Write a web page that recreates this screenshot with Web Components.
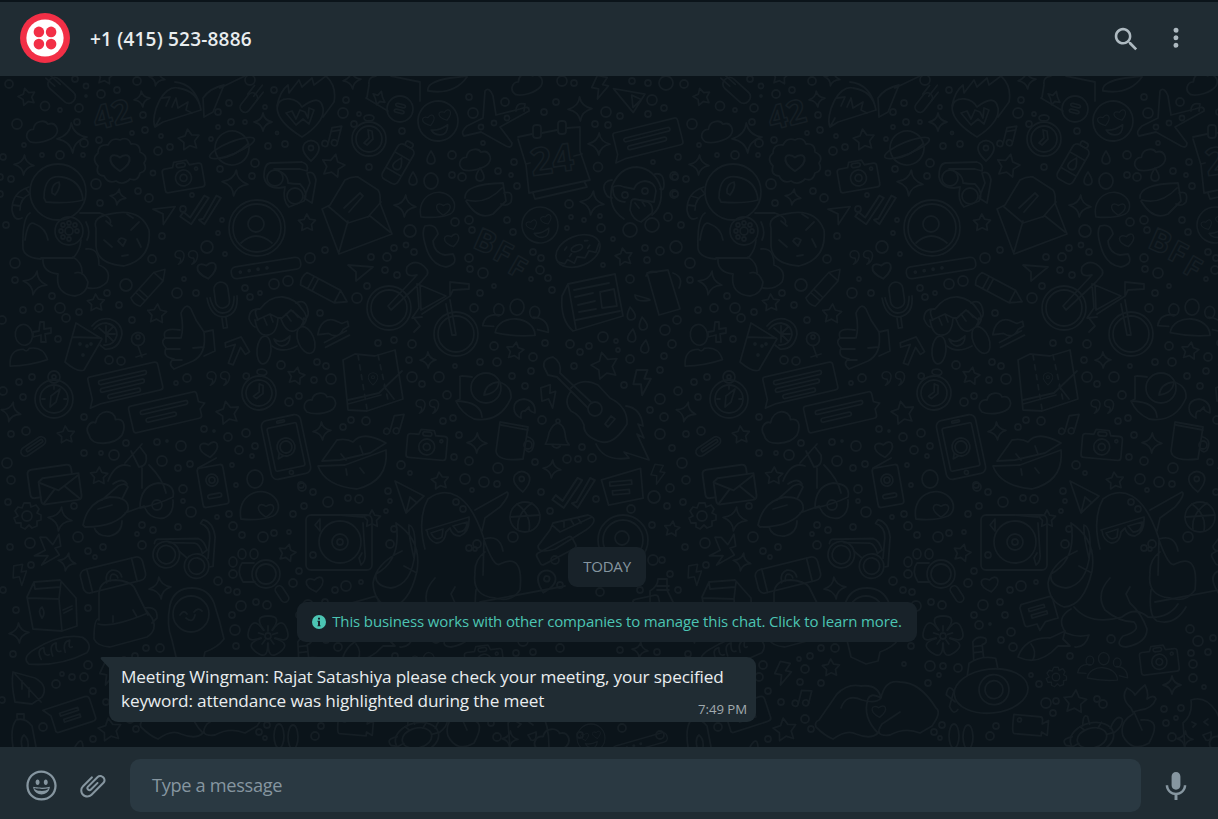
<!DOCTYPE html>
<html lang="en">
<head>
<meta charset="utf-8">
<title>Chat</title>
<style>
html,body{margin:0;height:100%;overflow:hidden;background:#0b141a}
</style>
</head>
<body>
<chat-app></chat-app>
<script>
const define=(name,html)=>{
  const t=document.createElement('template');t.innerHTML=html;
  customElements.define(name,class extends HTMLElement{
    constructor(){super();this.attachShadow({mode:'open'}).append(t.content.cloneNode(true));}
  });
};

/* ---------- wallpaper ---------- */
// Small dots: x, y, radius
const dots=`9,84,4 75,79,3 86,86,2.5 86,96,1 101,94,4 117,90,3 137,81,4 45,106,4.5 60,110,2 79,108,4 143,115,3 77,122,3 17,124,5 24,145,2 42,155,2 60,155,4 84,143,4 99,140,3 83,155,2 132,133,2 145,130,3 161,136,2 170,147,3 158,151,4 211,139,2 229,103,3 218,112,3 250,80,5 274,90,3 265,107,2 231,122,3 245,122,2 218,127,2 277,133,1.5 268,146,3 285,144,3 255,163,4 220,169,3 252,176,3 153,173,2.5 96,184,5 138,191,3 149,198,4 100,203,3 192,195,2 183,209,3 222,220,2 6,225,3 218,233,2 3,157,3 0,177,3 11,179,3 0,194,3 162,236,3
346,100,3 343,113,5 359,114,2 402,131,3 469,97,3 473,113,5 505,102,4 544,112,3 556,102,3 562,81,5 574,83,3 632,81,3 648,83,3 666,83,7 652,100,5 664,108,3 606,112,5 620,116,3 595,124,3 608,125,3 648,114,3 483,143,2 452,155,4 369,167,3 452,175,3 462,177,4 498,171,3 514,162,3 511,175,2 517,186,3 598,167,4.5 653,162,2 674,176,4 674,194,4 668,217,4 569,204,4 571,217,2 584,220,2 600,216,2 601,228,4 567,228,2 507,220,3 455,222,4 469,220,4 472,230,3 410,231,6 513,232,3 406,245,2.5 394,248,3 414,252,3 371,257,3 387,257,4 385,270,3 397,275,3 469,258,4 470,269,3 483,273,5 533,252,3 541,258,3 540,270,4 548,278,3 531,279,2 552,290,3 494,286,2 480,293,3 474,308,4 613,239,2 645,248,3 647,260,3 660,251,4 676,247,6 603,265,2 630,279,4 357,298,5 367,286,3
15,263,5 15,280,3 52,296,3 23,310,3 39,308,4 60,308,5 66,318,4 79,312,3 58,339,3 107,293,3 126,285,6 119,305,3 132,320,3 152,259,4 177,293,5 196,293,3 184,279,2 207,247,6 225,254,2 245,288,3 250,297,3 260,293,2 274,284,5 288,281,5 310,258,5 320,313,3 325,250,3 109,360,4 121,361,4 19,382,3 32,377,3 23,397,3 2,320,4 3,391,4 187,378,4 176,383,2 281,365,4 317,362,3 326,366,3 314,380,3 331,379,5 299,396,3 289,402,4 84,417,3 11,434,3 26,431,4 126,443,3 84,453,3 101,453,2 114,455,5 157,442,3 167,441,1 181,446,5 204,429,3 214,431,1 228,437,4 246,433,4 239,450,4 255,446,3 252,456,2 232,465,2 162,461,5 178,468,3 190,464,3 7,463,5 11,480,4 236,485,2 301,485,3
378,343,3 394,340,3 412,344,4 409,360,3 455,366,2 412,377,5 439,377,5 422,384,3 447,395,4 480,362,3 497,362,4 494,346,4 545,343,3 533,357,4 531,371,3 512,376,3 525,386,3 570,344,4 580,352,3 589,346,3 603,337,5 616,341,2 618,350,2 574,366,3 630,359,4 624,385,3 665,330,5 672,344,4 664,356,3 660,370,3 660,399,5 650,410,3 664,417,4 660,434,5 672,448,3 351,420,3 366,421,4 343,427,3 443,421,3 453,418,3 459,435,3 454,457,3 401,465,4 410,473,2 469,461,4 498,468,5 542,420,4 535,462,3 567,459,4 578,459,3 592,458,4 582,447,3 465,479,5 484,482,5 497,484,3 472,490,2 388,491,3 390,501,2 386,511,2 348,498,3 359,499,4 394,529,3 390,544,4 541,492,3 550,511,3 513,537,5 596,499,3 631,509,4 654,497,6 670,488,4 667,506,3 652,525,3
8,502,3 74,506,3 10,547,3 30,543,5 78,537,5 31,565,3 88,551,3 95,557,2 103,547,3 137,534,2 142,525,3 153,530,3 142,545,4 178,527,3 183,489,4 183,501,2 191,512,5 217,517,2 229,514,3 233,526,4 242,535,3 263,537,5 274,533,3 289,532,2 293,514,3 302,487,4 313,492,3 304,506,3 328,502,5 299,571,3 293,583,4 218,581,4 228,590,3 237,592,3 241,606,5 256,602,3 267,605,4 232,615,3 235,630,5 236,646,3 16,610,3 88,608,3 13,654,3 88,665,4 62,674,2 72,677,3 84,677,4 56,684,4 93,691,3 43,727,4 2,700,3 3,590,3 146,648,3 160,648,4 136,729,3 93,739,3 124,659,2 135,656,3 130,669,4 125,682,3 146,683,3 106,702,3 130,719,4 229,664,2 255,666,5 268,666,3 283,668,4 264,675,2 253,683,3 259,732,3 265,738,2 267,725,3
364,684,3 371,703,5 381,701,3 378,713,3 422,699,3 428,704,4 395,656,3 346,586,5 335,590,3 361,582,2 338,647,4 326,640,3 330,615,3 325,602,3 308,605,5 336,632,4 299,615,3 304,625,4 315,624,1 356,675,2 436,639,4 515,629,4 523,641,5 516,653,3 533,652,3 538,638,3 518,664,4 518,678,4 489,709,3 506,708,3 491,723,3 501,718,2 497,737,4 529,687,2 321,726,3 315,736,4 469,548,3 477,544,4 475,549,2 555,560,4 653,560,5 560,585,3 600,592,4 640,590,3 560,648,4 620,650,3 657,652,3 662,560,3 670,574,3 580,735,3 622,728,4 660,735,4`;
const stars=`27,97,9 189,140,11 307,223,9 105,76,9 333,166,12 624,257,9 96,303,9 157,314,10 296,376,9 228,413,12 66,435,9 99,476,9 515,351,9 605,366,14 440,481,9 372,519,9 672,529,8 287,553,9 110,730,12 156,668,9 400,702,12`;
const sparks=`142,99,8 72,138,15 263,122,9 24,165,10 235,183,13 118,197,8 157,78,8 352,80,9 580,109,12 599,144,11 405,206,11 592,203,12 35,283,12 11,412,10 322,431,9 428,360,8 477,443,10 552,469,9 60,519,12 67,562,9 160,588,11 19,633,10 497,685,9 510,739,8 640,650,8`;
const list=s=>s.trim().split(/\s+/).map(p=>p.split(',').map(Number));
const star=([x,y,r],i)=>{
  let d='';const turn=((i*37)%30-15)*Math.PI/180;
  for(let k=0;k<10;k++){const a=-Math.PI/2+turn+k*Math.PI/5,q=k%2?r*.52:r;d+=(k?'L':'M')+(x+q*Math.cos(a)).toFixed(1)+' '+(y+q*Math.sin(a)).toFixed(1);}
  return `<path d="${d}Z"/>`;
};
const spark=([x,y,r],i)=>{const k=r*.2;
  return `<path transform="rotate(${(i*23)%20-6} ${x} ${y})" d="M${x} ${y-r}Q${x+k*.6} ${y-k} ${x+r} ${y}Q${x+k*.6} ${y+k} ${x} ${y+r}Q${x-k*.6} ${y+k} ${x-r} ${y}Q${x-k*.6} ${y-k} ${x} ${y-r}Z"/>`;};
const g=(x,y,rot,body,s=1)=>`<g transform="translate(${x} ${y}) rotate(${rot}) scale(${s})">${body}</g>`;
const c=(x,y,r)=>`<circle cx="${x}" cy="${y}" r="${r}"/>`;
const e=(x,y,a,b)=>`<ellipse cx="${x}" cy="${y}" rx="${a}" ry="${b}"/>`;
const r=(x,y,w,h,q=2)=>`<rect x="${x}" y="${y}" width="${w}" height="${h}" rx="${q}"/>`;
const p=d=>`<path d="${d}"/>`;
const heart=p('M0 8C-14-1-8-10 0-4C8-10 14-1 0 8Z');
const cloud=p('M-14 8C-20 2-15-5-9-4C-7-13 4-12 6-7C14-9 17 0 12 5C6 10-8 11-14 8Z');
const camera=p('M-17-9H-9L-7-14H6L8-9H17Q20-9 20-6V12Q20 15 17 15H-17Q-20 15-20 12V-6Q-20-9-17-9Z')+c(0,3,8)+c(0,3,3.5)+r(-5,-12,9,4,2)+c(14,-4,1.5);
const lines=r(-26,-9,50,4,2)+r(-26,-1,46,4,2)+r(-20,7,34,4,2);
const bubble=p('M-34-15Q-36-15-36-12V8L-40 16L-28 14H34Q37 14 37 11V-12Q37-15 34-15Z')+lines;
const shortBubble=p('M-34-15Q-36-15-36-12V8L-40 16L-28 14H31Q34 14 34 11V-12Q34-15 31-15Z')+r(-26,-7,50,4,2)+r(-24,2,42,4,2);
const clock=c(0,0,17)+c(0,0,13)+e(0,-21,5,3)+p('M-1-9L3-8L4 0L-2 6L-5 4L0-1Z')+c(-15,-15,3);
const bolt=p('M-4-11H6L3-3H9L1 12L0 2H-7Z');
const quote=p('M-3 7Q1 4-1 0C-9 1-8-9-1-8C6-7 4 4-3 7Z')+p('M12 7Q16 4 14 0C6 1 7-9 14-8C21-7 19 4 12 7Z');
const check=p('M-18 5L-15 1L-9 6L4-14L8-12L-8 12Z')+p('M-1 8L3 7L15-14L19-12L4 12Z');
const person=e(0,-13,9,11)+p('M-20 17Q-18-1-3 2Q0 6 3 2Q18 2 20 17Q0 20-20 17Z');
const people=e(0,-15,7,8)+e(-18,-11,5,6)+e(18,-11,5,6)+p('M-20 12C-18-8 18-8 20 12Q0 15-20 12Z')+p('M-22 6L-33 6Q-32-7-16-6')+p('M22 6L33 8Q32-6 17-6');
const drop=p('M0-7Q8 5 0 6Q-8 5 0-7Z');
const cheeky=c(0,0,20)+g(-9,-2,-10,heart,.7)+g(8,-5,-10,heart,.7)+p('M-8 8Q0 10 9 5Q8 15 0 14Q-6 13-8 8Z');
const balloonBlob=p('M-19 11C-24-12 0-24 14-11C21-4 19 5 13 8Q0 13-19 11Z')+g(6,2,0,heart,.9);
const snapPhone=r(-20,-30,40,60,6)+r(-15,-22,30,44,2)+c(0,0,9)+c(0,0,6)+p('M-8 5L-10 10L-4 8')+r(-4,-27,8,2,1)+c(0,26,2);
const gear=p('M-3-13H3L4-9L9-11L12-7L10-3L14-1V4L10 5L10 10L5 12L2 9L-2 13L-6 11L-6 7L-11 7L-13 2L-9 0L-12-5L-9-9L-5-8Z')+c(0,0,5);
const pinmark=p('M0 10Q-12-1-6-8Q0-13 6-8Q12-1 0 10Z')+c(0,-3,2.5);
const envelope=p('M-14 13H-19Q-23 13-23 9V-9Q-23-13-19-13H13Q17-13 17-9V-4')+p('M-10-4H23V16Q23 20 19 20H-10Q-14 20-14 16V-1Z')+p('M-13 0L3 9L22-2M-12 19L-1 8M21 19L9 6');
const glasses=c(-17,4,13)+c(-17,4,9)+c(14,11,12)+c(14,11,8)+p('M-30-5Q-30-10-26-10L12-16Q18-15 22-6L18-2Q14-11 9-11L-16-8M-5-1L3 4M27 10L30 9L28-20Q24-34 14-35L12-31Q22-29 23-18L24 2');
const bottle=r(-9,-20,18,40,5)+p('M-9-9H9M-9 9H9')+r(-4,-25,8,5,2)+drop;
const pencil=p('M-24-7H14L25 0L14 7H-24Q-28 0-24-7ZM-16-7V7M-11-7V7M14-7V7');
const plug=r(-35,-6,70,12,5)+c(-26,0,1)+c(-17,0,1)+c(-8,0,1)+c(1,0,1);
const doodles=[
 g(62,90,42,r(-16,-6,32,13,6)+p('M-19-3H-5M-20 2H-8')),
 g(112,115,-14,'<text text-anchor="middle" y="11" font-size="33">42</text>'),
 p('M155 127C150 115 163 84 178 88Q198 91 201 110L163 122ZM175 82Q196 84 201 110M155 127L160 118M162 98L170 97L166 106M172 107L176 98L178 108L188 102L186 110L192 113'),
 p('M204 117L203 98Q210 88 224 85L213 112ZM220 88L245 76'),
 g(250,101,-52,r(-13,-5,22,10,5)+p('M4-6H15M6 0H20M4 5H15')),
 p('M302 137C268 116 274 97 290 99Q298 100 302 107Q320 93 323 108C325 119 313 130 302 137ZM277 106Q280 91 288 85L289 93L299 80L302 87L312 78L314 85L326 76Q337 86 334 102L323 117'),
 p('M286 113L292 111L296 119L300 110L305 112L308 118L309 108L314 110L309 124L303 119L296 125Z'),
 g(43,132,-8,cloud),
 g(120,161,0,p('M0-21Q8-25 11-17Q20-18 20-9Q29-5 24 2Q28 10 20 12Q18 21 10 18Q3 25-4 20Q-12 23-16 15Q-25 14-22 5Q-29-2-22-8Q-22-17-12-16Q-8-24 0-21Z')+g(0,1,0,heart,1.15)),
 g(232,148,-22,c(0,0,17)+e(0,0,24,6)+p('M-16 5Q0 9 17 2')),
 g(183,175,-10,camera),
 g(311,151,0,pinmark),g(332,136,14,p('M-2 8V-8L7-12V4M-2-4L7-8')+c(-5,9,3)+c(4,6,3)),
 c(275,178,8)+c(295,196,8)+p('M264 177Q264 164 270 163L302 162Q309 164 307 171L300 169H274Q288 173 288 183Q293 184 300 184Q309 193 304 201L289 207Q282 200 285 187L279 188Q266 188 264 177ZM307 173Q314 170 316 180L312 203L304 198L310 183Z'),
 g(58,192,0,c(0,0,28)+p('M-14 6Q-14-18 4-15Q23-12 25 8Q10 12-12 10ZM-6 1Q-7-8 1-10Q3-5-3 3Z')),
 p('M29 187Q12 192 12 210Q14 222 22 218M30 194Q20 198 20 210M16 196L23 198M13 205L20 206M26 189L30 194'),
 p('M30 213Q22 218 23 249Q25 258 41 259M25 240Q28 219 35 224Q46 228 48 240M43 259Q42 272 58 274Q55 294 75 296Q87 294 88 282Q83 270 75 273M80 213L100 213Q113 218 110 224M86 222Q91 232 87 240M41 258H73Q80 251 81 240M73 257Q83 263 82 274M86 249Q99 247 99 265Q112 270 107 282Q100 290 88 288'),
 c(69,231,14)+c(69,231,4)+c(69,223,2)+c(69,239,2)+c(61,231,2)+c(77,231,2)+c(63,225,2)+c(75,225,2)+c(63,237,2),
 p('M96 228Q92 217 110 214Q140 207 149 230Q152 259 124 266Q97 264 96 246Z'),
 p('M106 221L112 226M127 214L133 218M139 222L131 230M104 240L112 247M118 241Q120 236 126 240L123 246ZM137 239L141 247M122 256L128 255'),
 g(164,211,20,p('M-11 2L9-8L4 13L0 3Z')),
 g(200,211,0,check,1.1),
 c(257,228,28)+c(257,228,24)+c(256,224,8)+p('M241 243Q256 229 272 243'),
 p('M330 205L345 180Q352 176 358 177L378 190Q381 194 380 203L392 234L339 254L322 209ZM328 206L348 223L370 216L390 232M339 252L348 221M381 202L368 217M344 208L360 193L363 196L349 212'),
 p('M369 84Q368 77 376 76M366 98L388 111M420 101V82L391 76M367 97L369 85'),
 c(400,109,13)+g(400,108,14,r(-5,-4,10,3)+r(-5,2,10,3)),g(379,98,20,p('M-7-2L-2-2L0-7L3-2L7 2L2 3L0 7L-3 2Z')),
 g(438,121,-8,cheeky),
 p('M428 91Q426 82 450 78L467 76M429 91Q454 95 467 77'),
 p('M483 118L485 91Q489 86 493 96L496 115L520 109Q530 105 529 111L500 127L512 143Q512 149 506 146L481 132L464 136Q460 132 467 126Z')+c(481,127,2.5)+c(494,123,2.5)+c(507,118,2.5)+p('M516 111Q516 102 525 104L524 111'),
 g(528,84,-12,cloud),g(599,87,12,bolt),g(369,139,0,clock),g(398,164,30,bottle),g(476,160,-8,cloud),
 p('M518 137L532 134M542 133L557 130M567 128L580 127V151L590 180L529 193L526 165L518 139M533 193L535 199L587 187L584 181M526 164L530 163M574 156L582 154')+g(537,132,0,r(-4,-7,8,13,3))+g(562,128,0,r(-4,-7,8,13,3)),
 g(552,160,-8,'<text text-anchor="middle" y="13" font-size="38">24</text>'),
 g(630,100,8,p('M-18-9L14-8L5 12ZM1-5L11-2L4 7Z')),
 g(649,139,-14,shortBubble,.95),g(431,158,0,drop),g(413,179,0,drop),g(480,175,0,drop),e(431,181,7,8),
 g(438,207,0,balloonBlob,.9),
 p('M465 198Q464 184 503 183L506 201L493 214Q478 221 466 201M467 200Q486 205 502 188M504 193Q514 190 511 202Q507 207 501 204'),
 g(439,246,0,p('M-14-20Q-3-23-1-12L-6-5Q-5 7 6 9L14 8Q20 18 7 21Q-8 19-13 1Q-18-14-14-20Z')),g(452,240,-12,heart,.85),
 g(485,242,24,'<text text-anchor="middle" y="10" font-size="31">B</text>'),g(503,253,28,'<text text-anchor="middle" y="10" font-size="30">F</text>'),g(518,267,30,'<text text-anchor="middle" y="10" font-size="28">F</text>'),
 g(540,225,-10,cheeky,.9),
 g(578,251,-22,e(0,0,23,15)+e(0,-3,6,3)+p('M-22 3L-17 7L-13 4L-8 10L-3 5L4 9L10 4L16 8L22 1M-12-6L-9-8M10-7L13-6M-10 2L-7 0M10 1L13-1')),
 p('M624 219Q607 208 612 186Q620 167 637 167Q655 169 661 188Q663 206 652 215M612 180Q603 181 604 189Q606 198 612 198M655 174Q664 172 664 185Q664 191 660 189M612 188Q616 184 624 187L634 189Q636 182 645 181Q655 182 656 191L654 202L641 200M613 189Q613 201 625 202')+c(625,195,3)+c(645,191,3)+p('M631 203Q631 199 635 199L648 202Q654 206 652 213L641 222Q633 220 630 210ZM635 203L639 208M641 200L645 206')+e(630,230,7,7)+e(652,225,7,7),
 g(358,269,0,p('M-10-4L15-2L-2 12V3Z')),
 g(150,286,-48,pencil,.9),g(181,258,0,quote,.9),g(207,270,-8,heart,1.1),g(266,268,-9,plug),
 g(223,304,-8,r(-7,-22,14,26,7)+p('M-15-8Q-14 12 0 13Q14 12 15-6M-12-8Q-10 9 0 9Q10 9 12-6M-3 13V24H1V13')),
 g(325,290,28,pencil),
 p('M181 338Q184 328 181 313Q186 302 191 309L196 320L204 332Q207 354 193 361L174 369Q167 363 174 359Q162 357 166 348Q160 342 165 338Q161 327 180 330M165 338H180M166 349H180M172 360H182M204 332L213 330L215 351L204 356M193 348L204 347'),
 g(236,351,20,p('M0-15L13-4L10 0L3-5L2 14L-3 14V-6L-11 0L-13-4Z')),
 p('M258 320Q252 308 260 309Q270 296 283 297Q296 299 302 309Q310 318 303 325M260 309Q249 308 249 319Q252 326 255 327M296 303Q306 298 308 311Q309 317 305 319M257 320L270 314L278 318L282 318L291 310L303 320M255 320Q258 337 268 335Q277 334 278 318M281 319Q286 333 294 331Q303 328 304 318M264 318L267 325M270 314L273 322M286 314L291 321M293 311L298 317')+g(264,350,5,e(0,0,7,14))+g(306,340,-22,e(0,0,8,14))+p('M274 339Q281 345 290 336Q290 345 282 346Q276 345 274 339M272 346Q282 354 297 346'),
 g(321,331,-12,p('M-1-3Q6-12 15-8L22-3L28-4V1L22 3Q15 12 7 4L-4 3ZM1 12L25 5M1 17L27 10')),
 g(26,347,-10,person,.95),g(42,332,0,p('M-2-10H2L2-3L9-4V1L3 2L4 10H-1V3L-9 5V0L-3-1Z')),
 p('M76 323L102 339L84 370Q78 373 65 362ZM72 337L101 338')+p('M92 326Q99 317 110 319Q122 323 122 334Q119 350 105 349L100 345M94 329Q99 323 106 323Q117 325 117 335Q114 346 104 345M106 326V334H115M99 328L106 334L113 341M113 327L106 334M106 334V342')+c(80,344,1)+c(87,346,1)+c(83,355,1)+c(91,344,1),
 c(138,339,6.5)+c(138,337,2)+p('M138 346L142 357M136 357L146 354'),
 c(389,308,22)+c(389,308,18)+c(456,334,22)+c(456,334,18)+p('M388 306L417 275Q404 278 407 267Q413 260 421 264Q430 270 427 275L421 282L391 310ZM420 285L421 310L446 296ZM417 284L419 308L412 318L422 317M446 304L452 335H456L450 300M450 296L453 290L469 289V284L450 282ZM450 296L422 314M414 318L420 326L414 332'),
 g(516,322,4,people),
 p('M568 284L615 274L623 316L573 331Q560 320 562 296ZM568 284L576 329M574 290L609 283M575 297L593 293M578 305L595 301M579 312L596 309M600 292L614 289L617 306L602 308ZM576 320L620 311'),
 p('M647 273L668 270L680 309L659 315ZM646 276Q648 270 657 272M650 300Q635 303 635 295L649 299M673 273Q684 277 679 288'),
 g(631,314,-8,drop),g(643,324,-8,drop),g(632,336,8,drop),g(645,347,8,drop),
 c(54,399,19)+c(54,399,14)+c(54,377,6)+c(54,377,2)+p('M50 407L51 396L60 389L56 402ZM54 386V389M42 399H45M64 399H67'),
 g(125,384,-13,bubble,.98),g(166,412,-13,p('M-34-14Q-37-14-37-11V11Q-37 14-34 14H32Q35 14 35 11V5L41 0L35-3V-11Q35-14 32-14Z')+r(-26,-7,50,4)+r(-22,2,32,4),.97),
 g(213,379,0,quote,.9),g(422,407,0,quote,.9),g(259,393,8,clock),g(321,404,0,cloud),
 g(105,428,0,p('M-15 7C-20 0-14-7-9-5C-6-19 9-18 10-8C20-10 19 1 16 7C9 16-13 18-15 7Z'),1.05),
 p('M343 360L355 354L375 356L395 350L403 399L367 411L348 410ZM348 400L379 393L402 371M384 386L394 399M348 404L381 395')+'<path stroke-dasharray="5 5" d="M358 355L367 409M378 355L388 400"/>'+g(373,379,0,pinmark,.6),
 g(33,446,-34,r(-14,-4,28,9,5)+r(-8,-1,19,3,1)),g(209,449,-8,heart,1.05),g(286,447,-12,snapPhone),
 g(54,481,-8,envelope,1.1),
 p('M125 463L142 444M131 451L139 467Q148 466 146 455L140 447M142 468L142 488M149 465Q163 479 166 493M108 481Q116 461 130 466M113 484Q123 477 127 484'),
 p('M460 377Q458 375 472 377M499 382Q512 386 511 398Q500 423 474 419Q461 413 456 401L460 399V377')+c(486,388,15)+p('M484 395Q486 383 499 382Q498 393 484 395ZM457 401Q481 402 482 417'),
 g(524,408,0,p('M-10 0Q-10-8 0-9Q12-7 11 5Q4 3 5-1L1 3Q-4 2-3 10Q-10 7-10 0Z')),
 g(548,397,-18,bolt),g(641,382,0,bolt,1.1),
 p('M544 367Q542 359 553 357Q562 362 560 373M557 377L588 408M560 373L592 403M544 367L548 375L557 377M571 388Q582 377 598 385L610 398Q628 407 627 424Q613 447 598 441Q583 435 584 425Q580 415 571 411Q563 402 571 391M626 406Q641 408 643 426L638 424L644 438L637 434L649 460L624 452L629 458Q604 462 596 444M605 424L611 416L615 419L608 427Z')+c(595,409,7),
 g(394,424,16,p('M-2 8V-8L7-12V4')+c(-5,9,3)+c(4,6,3)),
 g(427,444,5,camera),
 p('M500 422L528 427L523 459Q497 462 496 451ZM501 425L528 430M528 437Q537 440 532 450Q529 454 525 449')+c(528,445,4),
 g(557,435,4,p('M-11 10Q-9 6-8-2Q-5-11 0-12Q6-11 8-2Q9 6 13 9ZM-4 11Q0 15 4 11')+c(0,-14,2)),
 p('M322 461L337 440Q347 438 353 442Q363 430 386 443L370 453L340 460ZM386 450Q389 481 357 489Q325 486 318 466L345 465ZM341 454L346 460M360 446L363 454M346 469L347 475M360 468L364 473'),
 g(213,486,-10,r(-13,-20,26,40,3)+c(0,-6,6)+c(0,-6,3)+r(-7,8,14,4)+p('M-12-20L8-27')),e(255,479,8,9),
 g(260,508,0,balloonBlob),
 g(27,516,0,gear),g(49,549,-18,p('M-16 2L-4 0L-5-14L1-12L5-3L14-11L12 1L6 1L8 9L-12 13L-3 6Z')),g(19,575,-10,bolt,.9),
 p('M83 525Q88 501 110 497Q130 497 128 510Q117 527 85 527ZM98 509L112 505M102 500L118 486Q126 482 128 487L122 499M94 527Q97 537 110 536Q122 533 122 521M140 508Q140 486 158 483Q176 484 173 497Q159 504 140 508ZM145 508Q150 520 164 518Q174 514 173 500M125 513L144 506')+c(157,505,5),
 g(184,553,8,glasses,1.02),
 c(266,574,14)+c(266,574,10)+g(282,594,-34,r(-4,-9,8,18,4))+p('M254 563L242 563Q236 571 243 582L255 582')+e(233,562,4,5)+e(242,554,4,5)+e(254,554,4,5)+e(233,574,4,4),
 g(113,575,-14,r(-32,-12,64,24,6)+p('M-24-12V12M22-12V12')+p('M-8 6Q-8-4 0-5Q8-4 8 4M-4 5Q-3-1 0-1Q4 0 4 4')),
 p('M99 620V593Q100 580 116 580Q129 581 134 587L148 615M98 619Q94 620 94 639Q97 646 110 647L147 637Q158 630 152 618L146 610M98 624Q112 628 148 613M145 608Q158 606 157 618L152 623M113 616V622M133 610L137 617'),
 p('M34 582L60 580L76 598L77 626L62 631L33 629L27 597ZM28 598L59 599L62 631M59 599L61 582M34 583L35 589L60 587M42 618Q37 610 42 607Q46 614 42 618ZM63 610L72 606M64 613L72 609'),
 p('M172 640Q166 625 170 605Q174 588 192 588Q208 588 214 603Q220 621 224 639Q217 648 205 652L203 661L191 664L176 657Z')+c(191,614,18)+p('M180 615Q184 609 187 614M194 612Q198 607 202 611M186 618Q193 624 195 615'),
 g(268,636,0,[0,72,144,216,288].map(a=>`<g transform="rotate(${a})">${p('M-4-6Q-15-20 0-20Q15-20 4-6M0-5V-10')}</g>`).join('')+c(0,0,3)),
 g(57,652,-12,p('M-30 6Q-36-2-22-7Q8-18 28-9Q37 0 29 7Q0 15-30 6ZM-17 4Q-20-7-12-7Q-14 2-8 1M-5 3Q-7-9 1-9Q-2 1 4 0M8 2Q7-9 15-9Q11 0 16-2')),
 p('M13 672L35 678Q49 686 42 697L32 704L15 702Q11 684 13 672ZM15 674L41 702M22 681V689M29 688V697'),
 g(70,713,-18,p('M-25-11H19Q23-11 23-7V12Q23 15 19 15H-16Q-20 15-19 11V-3ZM-10-3H9V0H-10ZM-8 4H9V7H-8Z')),
 p('M13 747Q10 728 16 720Q25 717 32 726L36 747M17 718V714H24V719M22 747Q20 738 24 735Q29 739 28 747M75 747Q82 735 83 747'),
 p('M141 727Q139 722 144 720L162 694Q173 683 186 686Q203 684 206 698Q201 704 187 700Q171 693 166 708M206 698Q196 692 193 699Q187 717 203 733Q196 740 181 734Q172 729 158 739Q150 736 141 727M206 698Q210 679 225 682Q245 682 261 708Q267 712 257 726L245 733Q230 727 215 735Q198 737 207 724L225 712')+g(204,711,-5,heart,.8),
 g(107,673,12,bolt),g(128,697,14,p('M-3 8V-6L7-8V5')+c(-6,8,3)+c(4,5,3)),
 r(306,515,66,55,5)+c(340,542,21)+c(340,542,8)+c(340,542,3)+p('M315 525L320 519V531ZM363 523L365 554Q366 561 361 565L359 558L362 553')+c(313,555,3),
 g(315,584,-10,heart),g(364,613,-16,p('M-15-13H14Q17-13 17-10V10H4L-4 17L-5 10H-14Q-17 10-17 7V-10ZM-9-7H7V-4H-9ZM-8 0H8V3H-8Z')),
 p('M343 657Q350 637 375 638L390 631L388 639L395 646H383Q364 667 343 657ZM356 644Q362 651 358 660'),
 g(316,690,-6,e(0,1,37,22)+c(3,0,15)+c(3,0,9)+p('M-22-17L-19-29Q-6-36 8-31L9-21M-14-32L-13-50Q-8-56 0-52Q2-47-4-46V-33M-13-45H-4M-13-39H-4M-37 8L-45 0Q-42-11-37-3L-43 12Q-40 22-35 16')),
 g(381,677,0,gear,.75),g(428,670,4,people,.76),g(484,659,-7,camera,.95),
 g(356,726,5,p('M-18-10H8Q11-10 11-7V-3L17-7V8L11 5V9H-16Q-19 9-18-10Z')+c(-12,-5,2)),
 g(285,742,0,e(-6,-6,5,12)+e(8,-5,5,12)),
 g(417,738,-14,e(0,0,22,15)+e(0,0,15,10)+p('M20-5Q30-18 34-11Q33-4 23 0M-19-6Q-31-7-27 1L-22 3M-6-14Q-3-26 1-22L1-14M-5-9L-9-14M8-8L13-13M15 0H22M-14 2L-22 4')),
 g(465,712,0,p('M-9-4Q-20-14-13-24Q-7-21-5-17Q0-23 5-27Q9-19 7-13Q14-18 16-13Q12-3 0-2L-7 0ZM-6 0L2 18M-7 2Q-21 10-17 24Q-8 41 9 31Q23 6 1 8')),
 p('M510 747L508 723Q518 715 516 700Q530 695 541 711Q549 725 549 747M517 722L521 724L518 727M533 719L529 722L533 725M528 735L536 732Q537 742 531 740Z'),
 p('M425 549Q417 519 428 499Q442 488 457 496Q473 505 484 539Q500 534 503 551M426 530L469 517Q470 532 460 536Q452 536 450 528L446 532Q445 543 436 543Q428 540 427 531M431 533L443 529L442 537Q435 542 431 533ZM453 526L467 522Q467 532 458 532ZM475 510L507 492Q511 494 500 507L485 518M485 518L482 531')+c(456,502,3)+c(463,509,3),
 p('M341 515L363 517M414 558Q408 534 409 525Q416 527 415 552Q412 585 391 588Q374 586 376 574Q402 560 396 523Q422 540 417 571Q409 606 389 607Q374 602 373 583Q376 563 402 551M404 566L415 572M399 607Q415 626 447 617Q460 606 473 617Q493 619 503 604M483 575L484 540Q494 568 500 564Q524 552 520 590Q511 603 495 598Q472 596 475 574Q474 560 485 552M476 590Q473 616 482 621Q500 626 511 607M396 609Q380 618 391 633Q403 638 414 635Q410 648 400 647M435 578Q420 594 430 610Q444 622 459 622Q467 631 448 636Q439 646 451 647Q472 643 472 629Q467 614 455 603L451 594L455 587'),
 c(525,517,15)+p('M510 517L540 515M517 504Q532 515 529 531M532 503Q516 514 518 529'),
 g(573,494,0,check,1.15),g(622,486,-5,p('M-20-8L20-16V14L-15 18ZM-12-5H10V-1H-12ZM-10 4H7V8H-10Z')),g(657,474,8,bolt,.85),g(522,482,-5,pinmark),
 g(407,496,0,p('M-12-15L17 0L-1 17ZM3 1L10 7M3 1L-1 17')),
 p('M538 546L550 530L553 523L588 515Q601 519 586 530L555 549Q538 554 538 546ZM552 525L560 532L592 517M564 522V527M571 520L574 525M578 518L581 523'),
 c(623,540,25)+c(623,540,20)+c(622,538,7),
 g(546,582,14,pinmark,1.1),p('M480 602L565 586M650 602L650 591Q658 586 658 579H667V590L673 602M657 586H669M657 590H669'),
 g(545,555,-28,r(-8,-5,40,13,3)),g(648,611,-12,r(-13,-14,26,28,3)+p('M0-8V5')),
 g(591,738,0,cheeky,.7),g(640,744,-16,plug,.8),g(553,741,0,cloud,1.1),g(666,681,0,person,.8)
].join('');

define('chat-wallpaper',`<style>
:host{display:block;overflow:hidden}
svg{display:block;width:100%;height:100%}
#tile{fill:none;stroke:#151e24;stroke-width:1.8;stroke-linejoin:round;stroke-linecap:round}
text{font-family:"Open Sans",sans-serif;font-weight:700;fill:none;stroke:#151e24;stroke-width:1.6}
</style><svg viewBox="0 76 1218 671" preserveAspectRatio="xMinYMin slice" aria-hidden="true">
<g id="tile">${list(dots).map(d=>c(...d)).join('')}${list(stars).map(star).join('')}${list(sparks).map(spark).join('')}${doodles}</g>
<use href="#tile" x="675"/></svg>`);

/* ---------- icons ---------- */
const icons={
 search:`<svg width="30" height="30" viewBox="0 0 24 24"><path fill="currentColor" d="M15.9 14.3H15l-.3-.3c1-1.1 1.6-2.7 1.6-4.3 0-3.7-3-6.7-6.7-6.7S3 6 3 9.7s3 6.7 6.7 6.7c1.6 0 3.2-.6 4.3-1.6l.3.3v.8l5.1 5.1 1.5-1.5-5-5.2zm-6.2 0c-2.6 0-4.6-2.1-4.6-4.6s2.1-4.6 4.6-4.6 4.6 2.1 4.6 4.6-2 4.6-4.6 4.6z"/></svg>`,
 menu:`<svg width="30" height="30" viewBox="0 0 24 24"><path fill="currentColor" d="M12 7a2 2 0 1 0-.001-4.001A2 2 0 0 0 12 7zm0 2a2 2 0 1 0-.001 3.999A2 2 0 0 0 12 9zm0 6a2 2 0 1 0-.001 3.999A2 2 0 0 0 12 15z"/></svg>`,
 smile:`<svg width="33" height="33" viewBox="0 0 24 24"><path fill="currentColor" d="M9.153 11.603c.795 0 1.439-.879 1.439-1.962s-.644-1.962-1.439-1.962-1.439.879-1.439 1.962.644 1.962 1.439 1.962zm-3.204 1.362c-.026-.307-.131 5.218 6.063 5.551 6.066-.25 6.066-5.551 6.066-5.551-6.078 1.416-12.129 0-12.129 0zm11.363 1.108s-.669 1.959-5.051 1.959c-3.505 0-5.388-1.164-5.607-1.959 0 0 5.912 1.055 10.658 0zM11.804 1.011C5.609 1.011.978 6.033.978 12.228s4.826 10.761 11.021 10.761S23.02 18.423 23.02 12.228c.001-6.195-5.021-11.217-11.216-11.217zM12 21.354c-5.273 0-9.381-3.886-9.381-9.159s3.942-9.548 9.215-9.548 9.548 4.275 9.548 9.548c-.001 5.272-4.109 9.159-9.382 9.159zm3.108-9.751c.795 0 1.439-.879 1.439-1.962s-.644-1.962-1.439-1.962-1.439.879-1.439 1.962.644 1.962 1.439 1.962z"/></svg>`,
 clip:`<svg width="30" height="30" viewBox="0 0 24 24"><path fill="currentColor" d="M1.816 15.556v.002c0 1.502.584 2.912 1.646 3.972s2.472 1.647 3.974 1.647a5.58 5.58 0 0 0 3.972-1.645l9.547-9.548c.769-.768 1.147-1.767 1.058-2.817-.079-.968-.548-1.927-1.319-2.698-1.594-1.592-4.068-1.711-5.517-.262l-7.916 7.915c-.881.881-.792 2.25.214 3.261.959.958 2.423 1.053 3.263.215l5.511-5.512c.28-.28.267-.722.053-.936l-.244-.244c-.191-.191-.567-.349-.957.04l-5.506 5.506c-.18.18-.635.127-.976-.214-.098-.097-.576-.613-.213-.973l7.915-7.917c.818-.817 2.267-.699 3.23.262.5.501.802 1.1.849 1.685.051.573-.156 1.111-.589 1.543l-9.547 9.549a3.97 3.97 0 0 1-2.829 1.171 3.975 3.975 0 0 1-2.83-1.173 3.973 3.973 0 0 1-1.172-2.828c0-1.071.415-2.076 1.172-2.83l7.209-7.211c.157-.157.264-.579.028-.814L11.5 4.36a.572.572 0 0 0-.834.018l-7.205 7.207a5.577 5.577 0 0 0-1.645 3.971z"/></svg>`,
 mic:`<svg width="30" height="30" viewBox="0 0 24 24"><path fill="currentColor" d="M11.999 14.942c2.001 0 3.531-1.53 3.531-3.531V4.35c0-2.001-1.53-3.531-3.531-3.531S8.469 2.35 8.469 4.35v7.061c0 2.001 1.53 3.531 3.53 3.531zm6.238-3.53c0 3.531-2.942 6.002-6.237 6.002s-6.237-2.471-6.237-6.002H3.761c0 4.001 3.178 7.297 7.061 7.885v3.884h2.354v-3.884c3.884-.588 7.061-3.884 7.061-7.885h-2z"/></svg>`,
 info:`<svg width="14" height="14" viewBox="0 0 14 14"><circle cx="7" cy="7" r="7" fill="currentColor"/><path fill="#182229" d="M6 2.8h2v1.8H6zM5.4 5.8H8v4.6h.7v.9H5.4v-.9H6V6.8h-.6z"/></svg>`,
 logo:`<svg width="50" height="50" viewBox="0 0 50 50"><circle cx="25" cy="25" r="25" fill="#f22f46"/><circle cx="25" cy="25" r="18.6" fill="#fff"/><g fill="#f22f46"><circle cx="18.9" cy="18.9" r="5.3"/><circle cx="31.1" cy="18.9" r="5.3"/><circle cx="18.9" cy="31.1" r="5.3"/><circle cx="31.1" cy="31.1" r="5.3"/></g></svg>`
};
for(const [n,svg] of Object.entries(icons))define('icon-'+n,`<style>:host{display:block;flex:none;line-height:0}svg{display:block}</style>${svg}`);

define('chat-header',`<style>
:host{display:flex;align-items:center;height:74px;box-sizing:border-box;padding:0 27px 2px 20px;background:#202c33;color:#e9edef}
.name{margin-left:20px;padding-top:2px;flex:1;font-size:19px;font-weight:600;line-height:26px;letter-spacing:.2px}
.actions{display:flex;gap:20px;padding-top:2px;color:#aebac1}
</style><icon-logo></icon-logo><div class="name"><slot></slot></div><div class="actions"><icon-search></icon-search><icon-menu></icon-menu></div>`);

define('system-pill',`<style>
:host{display:flex;align-items:center;justify-content:center;box-sizing:border-box;height:40px;padding-bottom:2px;border-radius:9px;background:#182229;color:#8696a0;font-size:15px;white-space:nowrap}
</style><slot></slot>`);

define('message-bubble',`<style>
:host{display:block;position:relative;box-sizing:border-box;width:647px;height:65px;padding:8px 12px;border-radius:0 9px 9px 9px;background:#202c33;color:#e9edef;font-size:17.2px;line-height:24px;letter-spacing:-.15px;white-space:nowrap}
svg{position:absolute;left:-9px;top:0}
.time{position:absolute;right:9px;bottom:4px;font-size:13.2px;line-height:18px;letter-spacing:-.05px;color:#a0aaae}
</style><svg width="10" height="12" viewBox="0 0 10 12"><path fill="#202c33" d="M1.6 0H10V12L.8 2Q0 .4 1.6 0Z"/></svg><slot></slot><span class="time"><slot name="time"></slot></span>`);

define('message-composer',`<style>
:host{display:flex;align-items:center;height:72px;box-sizing:border-box;padding:5px 27px 0 25px;background:#202c33;color:#8696a0}
icon-clip{margin-left:20px}
.field{flex:1;height:53px;box-sizing:border-box;margin:0 20px 0 22px;padding-left:22px;border-radius:10px;background:#2a3942;font-size:18.2px;line-height:52px;letter-spacing:-.32px}
</style><icon-smile></icon-smile><icon-clip></icon-clip><div class="field"><slot></slot></div><icon-mic></icon-mic>`);

define('chat-app',`<style>
:host{display:flex;flex-direction:column;width:1218px;height:819px;box-sizing:border-box;padding-top:2px;background:#0b141a;font-family:"Open Sans","Noto Sans",sans-serif}
.body{display:grid;flex:1;min-height:0;background:#0b141a}
.body>*{grid-area:1/1}
.log{display:flex;flex-direction:column;justify-content:flex-end;align-items:center;gap:15px;padding:0 4px 25px 0;position:relative}
.day{width:78px;letter-spacing:-.2px}
.notice{width:620px;color:#4cc5b3;letter-spacing:-.13px}
.notice icon-info{margin:2px 6px 0 0}
message-bubble{align-self:flex-start;margin-left:109px}
.l{display:block}
</style>
<chat-header>+1 (415) 523-8886</chat-header>
<div class="body"><chat-wallpaper></chat-wallpaper>
<div class="log"><system-pill class="day">TODAY</system-pill>
<system-pill class="notice"><icon-info></icon-info><span>This business works with other companies to manage this chat. Click to learn more.</span></system-pill>
<message-bubble><span class="l">Meeting Wingman: Rajat Satashiya please check your meeting, your specified</span><span class="l">keyword: attendance was highlighted during the meet</span><span slot="time">7:49 PM</span></message-bubble>
</div></div>
<message-composer>Type a message</message-composer>`);
</script>
</body>
</html>
